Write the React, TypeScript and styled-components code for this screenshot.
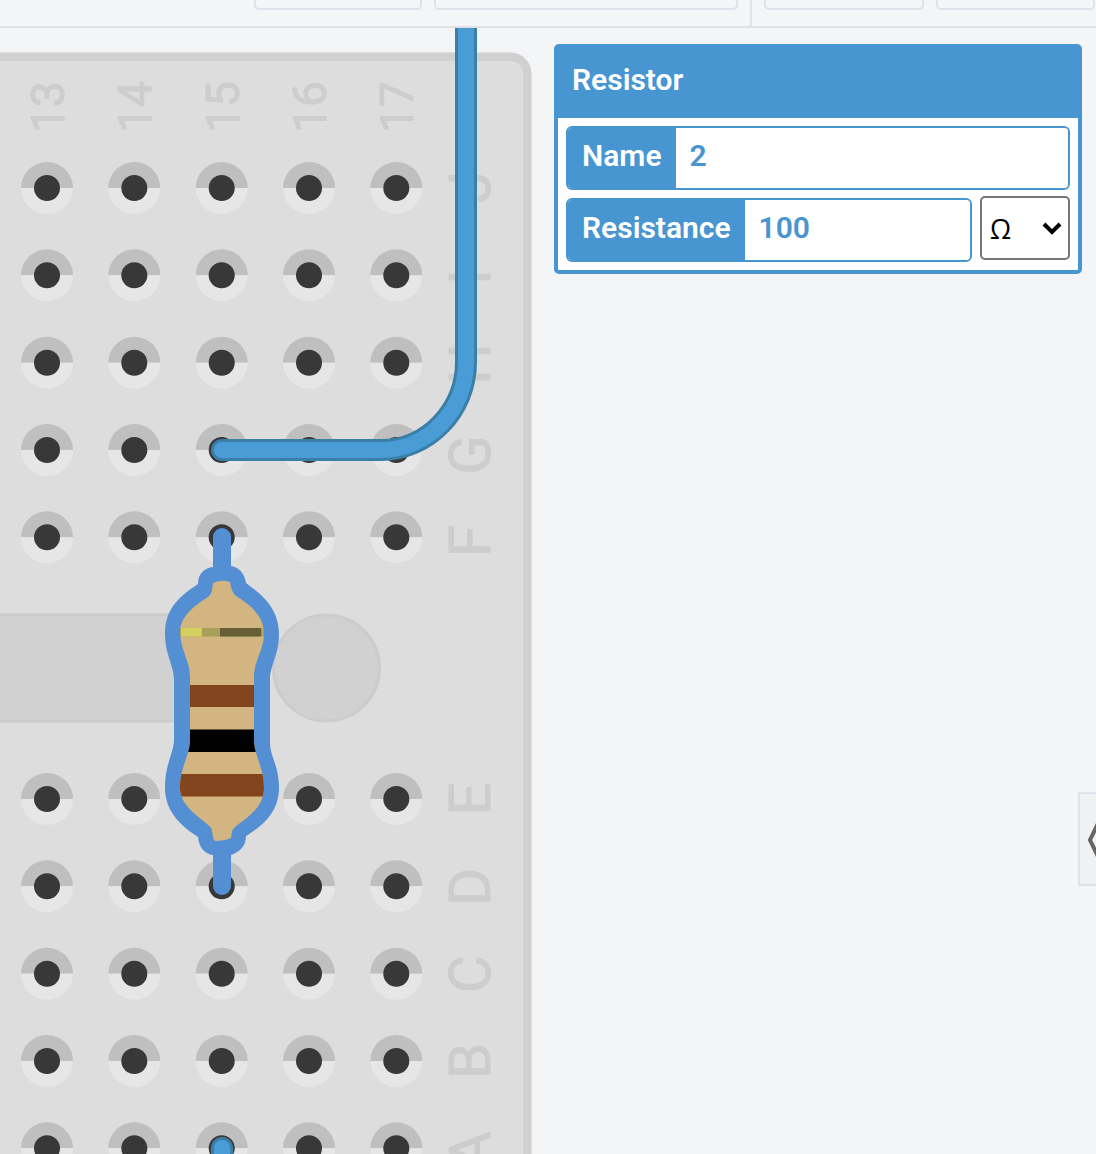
import React, { useState } from "react";
import styled, { createGlobalStyle } from "styled-components";

const GlobalStyle = createGlobalStyle`
  *, *::before, *::after { box-sizing: border-box; }
  body {
    margin: 0;
    background: #f4f5f7;
    font-family: Roboto, "Liberation Sans", sans-serif;
  }
`;

const accent = "#4795d1";
const line = "#dfe2e8";

const Page = styled.div`
  display: flex;
  flex-direction: column;
  height: 100vh;
  overflow: hidden;
`;

const Toolbar = styled.header`
  display: flex;
  flex: none;
  justify-content: flex-end;
  border-bottom: 2px solid ${line};
`;

const ToolGroup = styled.div<{ $divided?: boolean }>`
  display: flex;
  gap: 12px;
  padding: 0 ${(p) => (p.$divided ? 12 : 1)}px 16px 12px;
  border-right: ${(p) => (p.$divided ? `2px solid ${line}` : "none")};
`;

const ToolButton = styled.button<{ $width: number }>`
  width: ${(p) => p.$width}px;
  height: 10px;
  padding: 0;
  background: transparent;
  border: 2px solid ${line};
  border-top: none;
  border-radius: 0 0 5px 5px;
`;

const Workspace = styled.main`
  display: flex;
  flex: 1;
  min-height: 0;
`;

const Canvas = styled.section`
  flex: none;
  overflow: hidden;
`;

const Drawing = styled.svg`
  display: block;
`;

const BoardLabel = styled.text<{ $size: number }>`
  font-family: Roboto, "Liberation Sans", sans-serif;
  font-size: ${(p) => p.$size}px;
  text-anchor: middle;
  fill: #cdcdcd;
  stroke: #cdcdcd;
  stroke-width: 1px;
  stroke-linejoin: round;
`;

const Side = styled.aside`
  display: flex;
  flex: 1;
  flex-direction: column;
  min-width: 0;
  padding: 16px 0 0 22px;
`;

const Panel = styled.form`
  margin-right: 14px;
  background: #fff;
  border: 4px solid ${accent};
  border-radius: 5px;
`;

const PanelTitle = styled.h2`
  margin: 0;
  padding: 14px 14px 20px;
  background: ${accent};
  color: #fff;
  font-size: 30px;
  font-weight: 600;
  line-height: 36px;
`;

const Fields = styled.div`
  display: flex;
  flex-direction: column;
  gap: 8px;
  padding: 8px;
`;

const FieldRow = styled.div`
  display: flex;
  gap: 8px;
`;

const Field = styled.div`
  display: flex;
  flex: 1;
  min-width: 0;
  height: 64px;
  overflow: hidden;
  background: #fff;
  border: 2px solid ${accent};
  border-radius: 6px;
`;

const FieldLabel = styled.label`
  padding: 10px 14px 14px;
  background: ${accent};
  color: #fff;
  font-size: 30px;
  font-weight: 600;
  line-height: 36px;
`;

const FieldInput = styled.input`
  flex: 1;
  min-width: 0;
  padding: 0 14px 6px;
  background: #fff;
  border: none;
  outline: none;
  color: ${accent};
  font-family: inherit;
  font-size: 30px;
  font-weight: 600;
`;

const UnitBox = styled.div`
  position: relative;
  width: 90px;
  height: 64px;
  margin-top: -2px;
`;

const UnitSelect = styled.select`
  appearance: none;
  width: 100%;
  height: 100%;
  padding: 0 8px;
  background: #fff;
  border: 2px solid #767676;
  border-radius: 5px;
  color: #000;
  font-family: "Open Sans", sans-serif;
  font-size: 27px;
`;

const UnitArrow = styled.svg`
  position: absolute;
  top: 24px;
  right: 8px;
  pointer-events: none;
`;

const DrawerHandle = styled.button`
  display: flex;
  align-items: center;
  align-self: flex-end;
  width: 18px;
  height: 94px;
  margin-top: 518px;
  padding: 0 0 0 7px;
  overflow: hidden;
  background: #f0f1f3;
  border: 2px solid ${line};
  border-right: none;

  svg {
    flex: none;
  }
`;

const columns = [
  { name: "13", x: 47 },
  { name: "14", x: 134.3 },
  { name: "15", x: 221.7 },
  { name: "16", x: 309 },
  { name: "17", x: 396.3 },
];

const rows = [
  { name: "J", y: 188, labelY: 187 },
  { name: "I", y: 275.3, labelY: 277 },
  { name: "H", y: 362.7, labelY: 364 },
  { name: "G", y: 450, labelY: 455 },
  { name: "F", y: 537.3, labelY: 541 },
  { name: "E", y: 799, labelY: 799 },
  { name: "D", y: 886.3, labelY: 887 },
  { name: "C", y: 973.7, labelY: 974 },
  { name: "B", y: 1061, labelY: 1061 },
  { name: "A", y: 1148.3, labelY: 1150 },
];

function Hole({ x, y }: { x: number; y: number }) {
  return (
    <g transform={`translate(${x} ${y})`}>
      <path d="M-26 0a26 26 0 0 1 52 0z" fill="#bfbfbf" />
      <path d="M-26 0a26 26 0 0 0 52 0z" fill="#e6e6e6" />
      <circle r="13" fill="#383838" />
    </g>
  );
}

function Wire({ d }: { d: string }) {
  return (
    <g fill="none" strokeLinecap="round">
      <path d={d} stroke="#3a7fa6" strokeWidth="22" />
      <path d={d} stroke="#499cd5" strokeWidth="16" />
    </g>
  );
}

const resistorBody =
  "M213 583Q222 579 230 582C231 588 232 592 236 596C250 605 264 615 264 634C264 650 254 660 254 677V742C255 757 264 768 264 788C264 808 246 818 235 827C231 831 232 834 231 838Q224 841 215 841C212 838 213 832 211 828C204 819 180 808 180 788C180 768 189 757 190 742V677C190 660 180 650 180 630C182 613 199 603 208 597C213 593 212 588 213 583Z";

function Resistor() {
  return (
    <g>
      <clipPath id="resistor-body">
        <path d={resistorBody} />
      </clipPath>
      <g fill="#558fd3">
        <rect x="213" y="528" width="18" height="367" rx="9" />
        <path d="M213 567C204 568 198 574 198 584C180 596 165 608 165 634C165 655 174 665 174 680V742C172 757 165 765 165 788C165 813 183 827 198 837C199 848 205 854 213 855H231C239 852 246 847 246 836C261 827 279 813 279 788C279 765 270 757 270 742V680C270 665 279 655 279 634C279 608 261 594 246 583C245 574 239 567 231 566Z" />
      </g>
      <path d={resistorBody} fill="#d2b580" />
      <g clipPath="url(#resistor-body)">
        <rect x="165" y="628" width="114" height="8.5" fill="#a89f5b" />
        <rect x="181" y="628" width="21" height="8.5" fill="#d5cf5c" />
        <rect x="220" y="628" width="41" height="8.5" fill="#665e34" />
        <rect x="165" y="685" width="114" height="22" fill="#82451e" />
        <rect x="165" y="729.5" width="114" height="22.5" fill="#000" />
        <rect x="165" y="774" width="114" height="22.5" fill="#82451e" />
      </g>
    </g>
  );
}

function Breadboard() {
  return (
    <Drawing width="532" height="1126" viewBox="0 28 532 1126" role="img" aria-label="Breadboard">
      <rect x="-100" y="52.5" width="631.5" height="1300" rx="21" fill="#d0d0d0" />
      <rect x="-100" y="61" width="623" height="1300" rx="12" fill="#dddddd" />
      <g fill="#d1d1d1" stroke="#cccccc" strokeWidth="3">
        <rect x="-100" y="615" width="322" height="106" />
        <circle cx="326.5" cy="668" r="53" />
      </g>
      {columns.map((c) => (
        <BoardLabel key={c.name} $size={46} transform={`translate(${c.x + 17} 107) rotate(-90)`}>
          {c.name}
        </BoardLabel>
      ))}
      {rows.map((r) => (
        <BoardLabel key={r.name} $size={58} transform={`translate(490 ${r.labelY}) rotate(-90)`}>
          {r.name}
        </BoardLabel>
      ))}
      {rows.map((r) => columns.map((c) => <Hole key={c.name + r.name} x={c.x} y={r.y} />))}
      <Wire d="M466 0V362C466 410 428 450 381 450H222" />
      <Wire d="M222 1148V1200" />
      <Resistor />
    </Drawing>
  );
}

export default function App() {
  const [name, setName] = useState("2");
  const [resistance, setResistance] = useState("100");

  return (
    <Page>
      <GlobalStyle />
      <Toolbar>
        <ToolGroup $divided>
          <ToolButton $width={168} type="button" />
          <ToolButton $width={304} type="button" />
        </ToolGroup>
        <ToolGroup>
          <ToolButton $width={160} type="button" />
          <ToolButton $width={159} type="button" />
        </ToolGroup>
      </Toolbar>
      <Workspace>
        <Canvas>
          <Breadboard />
        </Canvas>
        <Side>
          <Panel>
            <PanelTitle>Resistor</PanelTitle>
            <Fields>
              <Field>
                <FieldLabel htmlFor="name">Name</FieldLabel>
                <FieldInput id="name" value={name} onChange={(e) => setName(e.target.value)} />
              </Field>
              <FieldRow>
                <Field>
                  <FieldLabel htmlFor="resistance">Resistance</FieldLabel>
                  <FieldInput
                    id="resistance"
                    value={resistance}
                    onChange={(e) => setResistance(e.target.value)}
                  />
                </Field>
                <UnitBox>
                  <UnitSelect aria-label="Unit" defaultValue="ohm">
                    <option value="ohm">Ω</option>
                  </UnitSelect>
                  <UnitArrow width="20" height="16" viewBox="0 0 20 16" aria-hidden="true">
                    <path d="M2 4l8 8 8-8" fill="none" stroke="#000" strokeWidth="4" />
                  </UnitArrow>
                </UnitBox>
              </FieldRow>
            </Fields>
          </Panel>
          <DrawerHandle type="button" aria-label="Open drawer">
            <svg width="18" height="60" viewBox="0 0 18 60" aria-hidden="true">
              <path d="M18 0L3 31L18 62" fill="none" stroke="#666" strokeWidth="4" />
            </svg>
          </DrawerHandle>
        </Side>
      </Workspace>
    </Page>
  );
}
